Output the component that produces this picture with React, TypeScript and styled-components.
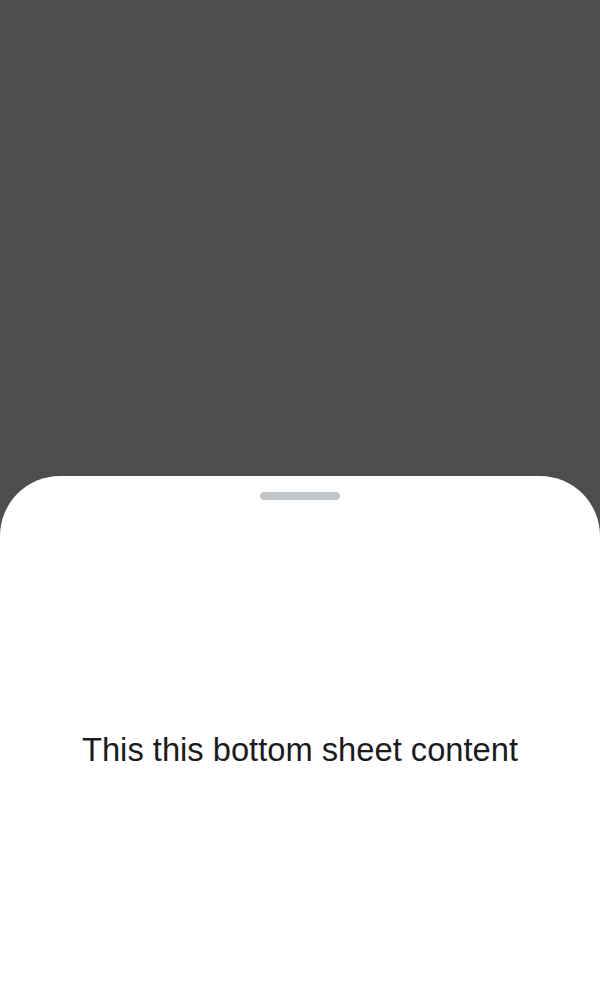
import { FC } from 'react'
import styled, { createGlobalStyle } from 'styled-components'

const GlobalStyle = createGlobalStyle`
    html, body {
        margin: 0;
        padding: 0;
        height: 100%;
    }

    #root {
        height: 100%;
    }
`

const Screen = styled.div`
    display: flex;
    flex-direction: column;
    justify-content: flex-end;
    height: 1000px;
    background-color: #4d4d4d;
    font-family: 'Liberation Sans', Arial, sans-serif;
`

const Sheet = styled.div`
    display: flex;
    flex-direction: column;
    align-items: center;
    height: 524px;
    box-sizing: border-box;
    padding-top: 16px;
    background-color: #fff;
    border-radius: 60px 60px 0 0;
`

const Handle = styled.div`
    width: 80px;
    height: 8px;
    border-radius: 4px;
    background-color: #c1c7ca;
`

const Content = styled.div`
    flex: 1;
    display: flex;
    align-items: center;
    justify-content: center;

    p {
        margin: 0;
        font-size: 32.7px;
        color: #1c1c1c;
    }
`

const App: FC = () => {
    return (
        <>
            <GlobalStyle />
            <Screen>
                <Sheet>
                    <Handle />
                    <Content>
                        <p>This this bottom sheet content</p>
                    </Content>
                </Sheet>
            </Screen>
        </>
    )
}

export default App
